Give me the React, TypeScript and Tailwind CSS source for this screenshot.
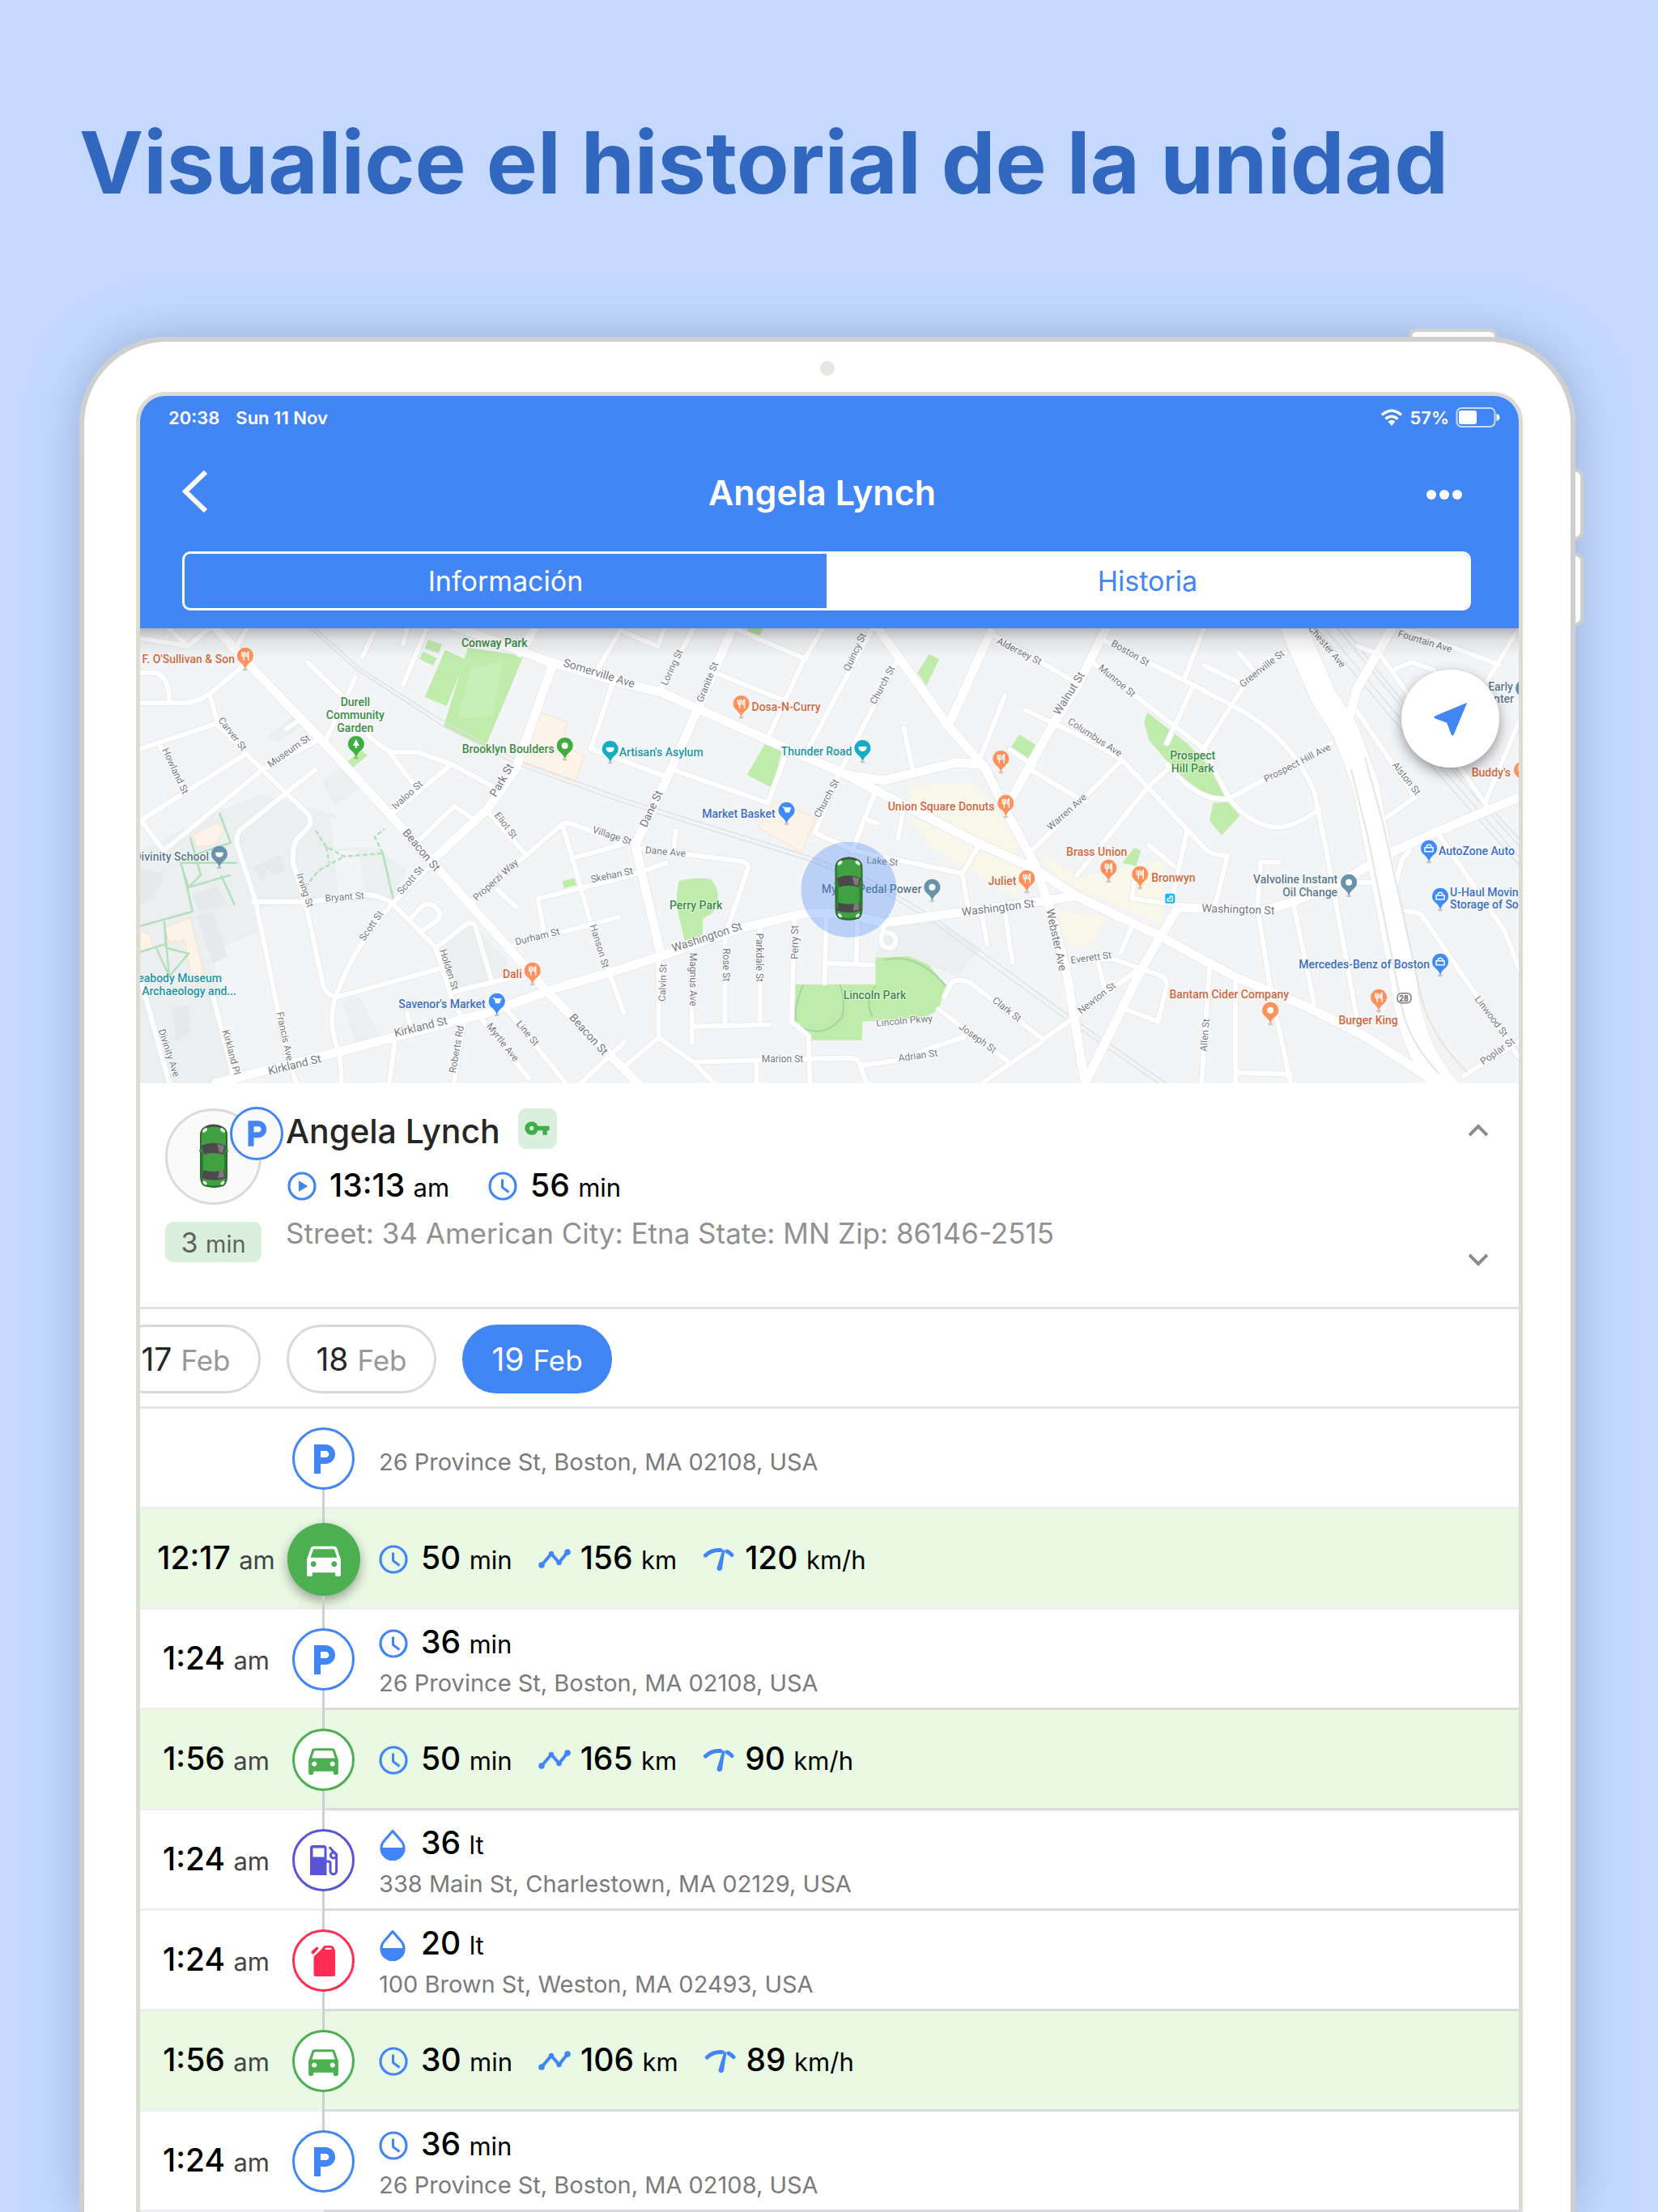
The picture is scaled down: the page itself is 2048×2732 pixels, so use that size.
import type { ReactNode } from "react";
import { MdDirectionsCar, MdLocalParking, MdNearMe, MdVpnKey } from "react-icons/md";
import clsx from "clsx";

type StopKind = "parking" | "drive" | "fuel" | "drain";

interface Stat {
  icon: "clock" | "distance" | "speed" | "drop";
  value: string;
  unit: string;
}

interface Stop {
  time?: string;
  kind: StopKind;
  active?: boolean;
  stats: Stat[];
  address?: string;
}

const stops: Stop[] = [
  { kind: "parking", stats: [], address: "26 Province St, Boston, MA 02108, USA" },
  {
    time: "12:17",
    kind: "drive",
    active: true,
    stats: [
      { icon: "clock", value: "50", unit: "min" },
      { icon: "distance", value: "156", unit: "km" },
      { icon: "speed", value: "120", unit: "km/h" },
    ],
  },
  {
    time: "1:24",
    kind: "parking",
    stats: [{ icon: "clock", value: "36", unit: "min" }],
    address: "26 Province St, Boston, MA 02108, USA",
  },
  {
    time: "1:56",
    kind: "drive",
    stats: [
      { icon: "clock", value: "50", unit: "min" },
      { icon: "distance", value: "165", unit: "km" },
      { icon: "speed", value: "90", unit: "km/h" },
    ],
  },
  {
    time: "1:24",
    kind: "fuel",
    stats: [{ icon: "drop", value: "36", unit: "lt" }],
    address: "338 Main St, Charlestown, MA 02129, USA",
  },
  {
    time: "1:24",
    kind: "drain",
    stats: [{ icon: "drop", value: "20", unit: "lt" }],
    address: "100 Brown St, Weston, MA 02493, USA",
  },
  {
    time: "1:56",
    kind: "drive",
    stats: [
      { icon: "clock", value: "30", unit: "min" },
      { icon: "distance", value: "106", unit: "km" },
      { icon: "speed", value: "89", unit: "km/h" },
    ],
  },
  {
    time: "1:24",
    kind: "parking",
    stats: [{ icon: "clock", value: "36", unit: "min" }],
    address: "26 Province St, Boston, MA 02108, USA",
  },
];

const days = [
  { day: "17", month: "Feb" },
  { day: "18", month: "Feb" },
  { day: "19", month: "Feb", selected: true },
];

/* ---------- icons ---------- */

function ClockIcon() {
  return (
    <svg className="w-9 h-9 text-[#4285f5]" viewBox="0 0 36 36" fill="none" stroke="currentColor" aria-hidden="true">
      <circle cx="18" cy="18" r="16" strokeWidth="3.200" />
      <path d="M17.500 9.500v10l8 6" strokeWidth="3" strokeLinejoin="round" />
    </svg>
  );
}

function PlayIcon() {
  return (
    <svg className="w-9 h-9 text-[#4285f5]" viewBox="0 0 36 36" fill="none" stroke="currentColor" aria-hidden="true">
      <circle cx="18" cy="18" r="16" strokeWidth="3.200" />
      <path d="M14.5 12v12l10-6z" fill="currentColor" strokeWidth="1" strokeLinejoin="round" />
    </svg>
  );
}

function DistanceIcon() {
  return (
    <svg className="w-10 h-7 text-[#4285f5]" viewBox="0 0 40 28" fill="none" stroke="currentColor" aria-hidden="true">
      <path d="M4 21 16 7l9.500 11L36 5" strokeWidth="4" strokeLinejoin="round" />
      <g fill="currentColor" stroke="none">
        <circle cx="4" cy="21" r="3.800" />
        <circle cx="16" cy="7" r="3.200" />
        <circle cx="25.500" cy="18" r="3.200" />
        <circle cx="36" cy="5" r="3.800" />
      </g>
    </svg>
  );
}

function SpeedIcon() {
  return (
    <svg className="w-10 h-8 text-[#4285f5]" viewBox="0 0 40 32" fill="none" stroke="currentColor" aria-hidden="true">
      <path d="M3.500 11C9 5.500 15 4 22 4.500" strokeWidth="5" strokeLinecap="round" />
      <path d="M30 6q4 2 6 4.500" strokeWidth="5" strokeLinecap="round" />
      <path d="m24.500 4 3 .6-3.500 23a3.200 3.200 0 0 1-6.300-1.600z" fill="currentColor" stroke="none" />
    </svg>
  );
}

function DropIcon() {
  return (
    <svg className="w-9 h-10 text-[#4285f5]" viewBox="0 0 36 40" aria-hidden="true">
      <path
        d="M17 3.500 7 15A14 14 0 1 0 27 15z"
        fill="none"
        stroke="currentColor"
        strokeWidth="3.200"
        strokeLinejoin="round"
      />
      <path d="M2 24h30a15 15 0 0 1-30 0z" fill="currentColor" />
    </svg>
  );
}

function PumpIcon() {
  return (
    <svg className="w-9 h-10" viewBox="0 0 36 40" fill="none" stroke="currentColor" aria-hidden="true">
      <path
        d="M4 1h14a3.500 3.500 0 0 1 3.500 3.500V38H1V4.500A3.500 3.500 0 0 1 4 1zm.5 3.500V15.500H18.500V4.500z"
        fill="currentColor"
        stroke="none"
        fillRule="evenodd"
      />
      <path
        d="M21 21h3a2 2 0 0 1 2 2v10a3.800 3.800 0 0 0 7.600 0V13l-8-9"
        strokeWidth="3"
        strokeLinecap="round"
        strokeLinejoin="round"
      />
      <circle cx="30" cy="13.500" r="3.600" strokeWidth="3" />
    </svg>
  );
}

function CanIcon() {
  return (
    <svg className="w-8 h-10" viewBox="0 0 32 40" fill="currentColor" aria-hidden="true">
      <path
        fillRule="evenodd"
        d="M18 1h7a4 4 0 0 1 3.500 2.500L30 7V36.500A2.500 2.500 0 0 1 27.500 39H6a2.500 2.500 0 0 1-2.500-2.500V16q0-1.500 1-2.500L13.500 5l1.500-2.500Q16 1 18 1zm.5 2.800L17.200 5.800h8.600L25 3.800z"
      />
      <path d="M1.300 7.500 6.500 3a1.500 1.500 0 0 1 2.200 2.500L4 10.800a1.800 1.800 0 0 1-2.700-3.300z" />
    </svg>
  );
}

const statIcons: Record<Stat["icon"], ReactNode> = {
  clock: <ClockIcon />,
  distance: <DistanceIcon />,
  speed: <SpeedIcon />,
  drop: <DropIcon />,
};

// Top view of the vehicle, 36 x 80 units
function CarShape() {
  return (
    <g>
      <path d="M6 4q12-7 24 0 5 3 5 10v50q0 10-5 13-12 4-24 0-5-3-5-13V14Q1 7 6 4z" fill="#2b6b2d" />
      <path d="M7 5q11-5 22 0 4 3 4 10v48q0 9-4 12-11 3-22 0-4-3-4-12V15q0-7 4-10z" fill="#3fa142" />
      <path d="M8 3q10-4 20 0l-1 2q-9-3-18 0z" fill="#4a4a4a" />
      <path d="M1 31l2 1v3l-3-1zm34 0-2 1v3l3-1z" fill="#2f8a32" />
      <path d="M3 27q15-7 30 0l-3 11q-12-4-24 0z" fill="#4b494b" />
      <path d="m22 25 9 2-2 9-4-1z" fill="#7d7a7e" />
      <path d="M5 57q13 4 26 0l2 10q-15 5-30 0z" fill="#4b494b" />
      <path d="m30 57-5 1-2 9 8-1z" fill="#7d7a7e" />
      <path d="M3 28l2 8v20l-2 8zm30 0-2 8v20l2 8z" fill="#2d7d30" />
      <g fill="#e4f3e4">
        <ellipse cx="7" cy="8" rx="3.500" ry="2" transform="rotate(-40 7 8)" />
        <ellipse cx="29" cy="8" rx="3.500" ry="2" transform="rotate(40 29 8)" />
        <ellipse cx="7" cy="73" rx="3" ry="1.800" transform="rotate(40 7 73)" />
        <ellipse cx="29" cy="73" rx="3" ry="1.800" transform="rotate(-40 29 73)" />
      </g>
    </g>
  );
}

/* ---------- map ---------- */

const minorRoads = [
  "M224 136 151 175 29 275 2 238",
  "M86 83 97 120 151 175 208 230Q214 240 206 248L193 262Q188 270 189 290L205 342 226 440Q230 456 246 455L369 421",
  "M128 46 86 81Q70 92 55 92H0",
  "M0 55H18Q36 58 36 90",
  "M0 12 59 22 86 0M35 0 59 22M132 0 117 27",
  "M0 149 94 118M25 146 55 201M0 238 128 157",
  "M216 175 124 249Q118 256 120 268L143 338 182 530 193 562",
  "M140 338H212L272 330Q290 326 312 340L365 394 385 456 400 486 388 562",
  "M362 290 312 340Q262 396 243 453 230 486 247 527L249 562",
  "M312 229 385 168M281 131Q300 150 312 153L342 153 385 168 446 201M308 153 342 198",
  "M207 42 251 85M266 61 228 142M289 5 275 35M354 0 325 70M330 0 325 20",
  "M339 268 388 220 411 235M430 227 476 279M411 338 522 242Q526 238 540 244L598 266",
  "M522 242 557 364 598 475M499 375 492 334 598 308 650 290M453 394 591 357M538 283 616 262",
  "M367 394 404 365Q412 362 415 370L434 434M388 449 457 432",
  "M335 358 350 342Q360 338 368 348 374 354 366 362L346 376",
  "M453 471 526 562M419 479 480 556M545 562 598 512M442 323 465 345M181 124 193 116",
  "M0 431 36 562M90 453 117 562M316 503 308 562M330 475 335 495",
  "M595 0 566 50M584 68 557 149 598 164 648 183",
  "M684 0 644 75M734 0 687 105M844 0 819 42 776 135M905 0 826 149M937 38 862 183 834 253",
  "M716 57 798 90M734 0 823 38M598 5 640 22 648 0",
  "M659 175 776 216 798 157M834 253 884 275 1016 303 1023 342M1037 268 1016 303",
  "M616 272 744 288Q754 292 751 298L727 368M662 250 660 270",
  "M909 201 880 275M895 235 911 241M944 123 955 175M944 220 937 260M1069 83 1037 164",
  "M641 506 598 542M641 405V506L684 536 709 562M684 536 826 532 880 531Q888 532 890 540L898 562",
  "M891 540 937 534 976 519 1019 505M809 357 805 486 826 504 828 562M762 536V562",
  "M682 400V512M723 376V490M766 366V490M682 492 777 490",
  "M848 357 846 438M887 357 885 414M848 414 905 416",
  "M994 456 1003 438Q1010 432 1026 438L1116 508 1158 479M987 471 1076 538M1041 562 1116 510",
  "M919 364 918 376Q936 376 934 388 930 400 918 392 914 384 918 376M1040 350 1047 390M1068 345 1078 412",
  "M1098 279 1212 164M1094 101 1158 131 1212 161 1247 198 1318 274Q1326 281 1344 281L1329 342",
  "M1101 175 1158 209 1170 215M1272 172 1244 198 1158 305M1055 8 1158 68M1075 150 1105 170",
  "M1176 42 1315 149 1347 212Q1376 246 1408 246 1430 244 1458 223",
  "M1347 210 1472 142M1269 168Q1310 218 1347 210",
  "M1194 16 1290 64 1347 94Q1420 130 1451 201L1465 268 1504 482",
  "M1315 0 1290 64M1301 72 1269 142M1415 31 1369 64 1312 153M1358 30 1376 52M1315 46 1360 68",
  "M1501 98 1576 209 1540 234M1529 27 1665 220M1704 116 1662 216M1552 50 1572 42 1600 52",
  "M1551 320 1560 285 1569 275M1565 349 1583 353 1704 530M1604 253 1687 375 1708 430",
  "M1636 553 1708 508M1426 342 1451 464M1408 289H1385L1381 345 1397 445 1422 562",
  "M1322 416 1312 562M1354 431V562M1354 549 1422 551M1560 0 1680 45M1704 0 1665 65M1505 22 1524 30",
  "M1158 412 1201 408 1264 430Q1271 436 1268 446L1258 486 1219 471M1158 479 1237 419M1184 412 1192 445",
  "M1226 368 1212 401M1294 249 1276 334M1247 268 1278 294M1230 306 1226 334 1283 342M1440 316 1520 314",
];

const majorRoads = [
  "M94 0 130 40 224 138 308 229 362 290 507 453 615 562",
  "M94 562 247 523 430 475 507 447 598 420 644 405 741 371 809 355Q848 346 919 364L1016 351 1158 331",
  "M380 -6 507 42 598 68 644 79 776 138 873 181 926 209 1037 266 1105 297 1158 331 1261 381 1354 431 1443 468 1515 505 1604 562",
  "M912 0 937 35 1001 123 1044 172 1073 231 1105 290 1123 342 1144 419 1168 562",
  "M1051 5 1001 116M873 181 919 188 1009 166 1041 168M1194 0 1158 72 1130 116 1076 212",
  "M730 5 687 105 651 186 612 268 644 405M511 42 465 172 430 223 362 286M488 0 470 30",
  "M1168 562 1237 423 1261 381 1283 345 1386 349 1426 338 1479 316 1551 275 1604 251 1704 209",
  "M1547 0 1504 75 1494 112",
];

const parks = [
  "M405 24 474 34 427 146 375 122z",
  "M377 27 402 38 379 96 352 85z",
  "M356 14 373 20 369 31 352 25z",
  "M350 29 367 37 362 46 345 38z",
  "M254 166 274 151 281 157 262 173z",
  "M522 312 538 309 541 317 524 321z",
  "M666 312Q690 307 705 310 716 320 714 335 714 352 696 358L695 379 673 386 668 364Q660 340 666 312z",
  "M809 440H909V407L950 405 975 416 996 442 987 471Q975 480 962 482L893 486 892 509H830L807 490z",
  "M773 142 794 149 781 197 750 181z",
  "M975 32 988 38 972 71 961 55z",
  "M1087 131 1110 146 1101 163 1075 149z",
  "M752 0H770L764 14 746 7z",
  "M1245 104 1294 142 1319 168 1342 209H1322L1301 197 1269 164 1247 138 1241 116z",
  "M1326 216 1347 215 1359 232 1337 256 1322 238z",
  "M1229 271 1237 275 1231 294 1214 290z",
];

const streets: [string, number, number, number, number?][] = [
  ["Carver St", 111, 133, 52],
  ["Museum St", 186, 155, -35],
  ["Howland St", 40, 178, 65],
  ["Ivaloo St", 333, 209, -42],
  ["Park St", 451, 190, -60, 14],
  ["Eliot St", 449, 246, 52],
  ["Beacon St", 344, 277, 50, 14],
  ["Scott St", 337, 314, -48],
  ["Scott St", 289, 370, -55],
  ["Bryant St", 253, 336, -4],
  ["Irving St", 200, 325, 72],
  ["Properzi Way", 442, 314, -42],
  ["Village St", 582, 260, 18],
  ["Skehan St", 584, 309, -12],
  ["Durham St", 492, 385, -14],
  ["Hanson St", 564, 394, 73],
  ["Holden St", 378, 423, 72],
  ["Francis Ave", 175, 505, 78],
  ["Kirkland Pl", 109, 525, 75],
  ["Divinity Ave", 32, 526, 72],
  ["Kirkland St", 192, 544, -14, 14],
  ["Kirkland St", 348, 497, -14, 14],
  ["Roberts Rd", 395, 521, -80],
  ["Myrtle Ave", 445, 514, 52],
  ["Line St", 476, 503, 50],
  ["Beacon St", 551, 505, 48, 14],
  ["Somerville Ave", 566, 60, 17, 14],
  ["Loring St", 661, 50, -65],
  ["Granite St", 705, 68, -68],
  ["Quincy St", 887, 31, -65],
  ["Church St", 921, 72, -62],
  ["Church St", 852, 212, -62],
  ["Dane St", 636, 225, -65, 14],
  ["Dane Ave", 649, 280, 5],
  ["Lake St", 917, 292, 5],
  ["Washington St", 702, 386, -18, 14],
  ["Calvin St", 650, 438, -88],
  ["Magnus Ave", 679, 434, 90],
  ["Rose St", 720, 416, 90],
  ["Parkdale St", 761, 407, 90],
  ["Perry St", 813, 388, -90],
  ["Washington St", 1061, 350, -7, 14],
  ["Webster Ave", 1128, 386, 78, 14],
  ["Clark St", 1069, 474, 38],
  ["Joseph St", 1033, 510, 36],
  ["Adrian St", 962, 532, -8],
  ["Marion St", 794, 536, 0],
  ["Lincoln Pkwy", 945, 489, -5],
  ["Aldersey St", 1085, 32, 27],
  ["Walnut St", 1152, 83, -58, 14],
  ["Warren Ave", 1148, 230, -42],
  ["Columbus Ave", 1178, 138, 33],
  ["Boston St", 1222, 34, 30],
  ["Munroe St", 1205, 68, 40],
  ["Greenville St", 1389, 53, -38],
  ["Chester Ave", 1464, 25, 50],
  ["Fountain Ave", 1587, 20, 17],
  ["Prospect Hill Ave", 1432, 170, -27],
  ["Alston St", 1562, 188, 52],
  ["Washington St", 1357, 352, 2, 14],
  ["Everett St", 1176, 411, -8],
  ["Newton St", 1185, 460, -38],
  ["Allen St", 1320, 503, -85],
  ["Linwood St", 1667, 482, 53],
  ["Poplar St", 1680, 526, -35],
];

type Anchor = "start" | "middle" | "end";

const places: [string, number, number, Anchor, string][] = [
  ["F. O'Sullivan & Son", 117, 43, "end", "#d0683f"],
  ["Durell", 266, 96, "middle", "#3a8d45"],
  ["Community", 266, 112, "middle", "#3a8d45"],
  ["Garden", 266, 128, "middle", "#3a8d45"],
  ["Conway Park", 438, 23, "middle", "#3a8d45"],
  ["Brooklyn Boulders", 512, 154, "end", "#3a8d45"],
  ["Artisan's Asylum", 592, 158, "start", "#1f96a3"],
  ["Dosa-N-Curry", 756, 102, "start", "#d0683f"],
  ["Thunder Road", 880, 157, "end", "#1f96a3"],
  ["Union Square Donuts", 1056, 225, "end", "#d0683f"],
  ["Market Basket", 785, 234, "end", "#3c6fc4"],
  ["Juliet", 1083, 317, "end", "#d0683f"],
  ["Mystic Pedal Power", 966, 327, "end", "#5c7a8c"],
  ["Perry Park", 687, 347, "middle", "#3a8d45"],
  ["Lincoln Park", 908, 458, "middle", "#3a8d45"],
  ["Brass Union", 1220, 281, "end", "#d0683f"],
  ["Bronwyn", 1250, 313, "start", "#d0683f"],
  ["Prospect", 1301, 162, "middle", "#3a8d45"],
  ["Hill Park", 1301, 178, "middle", "#3a8d45"],
  ["Valvoline Instant", 1480, 315, "end", "#5c7a8c"],
  ["Oil Change", 1480, 331, "end", "#5c7a8c"],
  ["AutoZone Auto", 1605, 280, "start", "#3c6fc4"],
  ["U-Haul Moving &", 1619, 331, "start", "#3c6fc4"],
  ["Storage of Somerville", 1619, 346, "start", "#3c6fc4"],
  ["Mercedes-Benz of Boston", 1594, 420, "end", "#3c6fc4"],
  ["Bantam Cider Company", 1420, 457, "end", "#d0683f"],
  ["Burger King", 1518, 489, "middle", "#d0683f"],
  ["Early", 1697, 77, "end", "#5c7a8c"],
  ["Center", 1698, 92, "end", "#5c7a8c"],
  ["Buddy's", 1694, 183, "end", "#d0683f"],
  ["Divinity School", 85, 287, "end", "#5c7a8c"],
  ["Peabody Museum", 101, 437, "end", "#1f96a3"],
  ["of Archaeology and...", 119, 453, "end", "#1f96a3"],
  ["Savenor's Market", 427, 469, "end", "#3c6fc4"],
  ["Dali", 472, 432, "end", "#d0683f"],
];

type PinGlyph = "food" | "dot" | "tree" | "cart" | "bag" | "mask";

const pins: [number, number, string, PinGlyph][] = [
  [130, 34, "#ff915c", "food"],
  [267, 143, "#3fae3f", "tree"],
  [525, 145, "#3fae3f", "dot"],
  [581, 149, "#12afc4", "mask"],
  [743, 93, "#ff915c", "food"],
  [893, 148, "#12afc4", "mask"],
  [1064, 161, "#ff915c", "food"],
  [1070, 216, "#ff915c", "food"],
  [799, 225, "#3d8bfd", "cart"],
  [1096, 309, "#ff915c", "food"],
  [979, 320, "#6894ab", "dot"],
  [1197, 296, "#ff915c", "food"],
  [1236, 304, "#ff915c", "food"],
  [1494, 314, "#6894ab", "dot"],
  [1593, 272, "#3d8bfd", "bag"],
  [1607, 331, "#3d8bfd", "bag"],
  [1607, 412, "#3d8bfd", "bag"],
  [1397, 472, "#ff915c", "dot"],
  [1531, 456, "#ff915c", "food"],
  [1710, 74, "#6894ab", "dot"],
  [1708, 175, "#ff915c", "food"],
  [98, 279, "#6894ab", "mask"],
  [441, 461, "#3d8bfd", "cart"],
  [485, 423, "#ff915c", "food"],
];

const pinGlyphs: Record<PinGlyph, ReactNode> = {
  food: <path d="M-4-5v4q0 2 2 2v5M0-5v4q0 2-2 2M-2-5v5M4 6V-5Q1.500-3 2 1h2" fill="none" stroke="#fff" strokeWidth="1.400" />,
  dot: <circle r="4" fill="#fff" />,
  tree: <path d="M0-6 4 2H1v3h-2V2h-3z" fill="#fff" />,
  cart: <path d="M-5-4h2l2 6h4l2-5h-7" fill="#fff" stroke="#fff" strokeWidth="1.300" />,
  bag: <path d="M-5-1h10v5H-5zm2 0a3 3.500 0 0 1 6 0" fill="none" stroke="#fff" strokeWidth="1.500" />,
  mask: <path d="M-5-2h10q0 6-5 6t-5-6z" fill="#fff" />,
};

function StreetMap() {
  return (
    <svg className="block w-full" viewBox="0 0 1704 562" role="img" aria-label="Mapa">
      <defs>
        <linearGradient id="map-shade" x1="0" y1="0" x2="0" y2="1">
          <stop offset="0" stopColor="#000" stopOpacity="0.260" />
          <stop offset="0.400" stopColor="#000" stopOpacity="0.080" />
          <stop offset="1" stopColor="#000" stopOpacity="0" />
        </linearGradient>
      </defs>
      <rect width="1704" height="562" fill="#f3f4f6" />

      {/* campus and institutional land */}
      <g fill="#ebeff0">
        <path d="M0 275 100 225 150 205 240 230 330 300 310 335 140 345 145 375 90 400 100 480 120 562H0z" />
        <path d="M225 190 250 170 270 200 240 220z M157 133 190 108 200 120 170 142z" />
        <path d="M375 385 410 368 455 410 450 430 390 445z M250 460 272 455 300 510 268 518z" />
        <path d="M919 364 980 360 1040 395 1010 430 975 416 950 405H909z" />
      </g>
      <g fill="#f3f4f6">
        <path d="M235 235 300 232 305 270 240 272zM240 275H270L280 335H245z" />
      </g>
      <g fill="#e6e9eb">
        <path d="M140 295 172 280 180 300 165 305 158 298 150 310z" />
        <path d="M64 330 95 318 108 342 75 350zM70 355 90 350 108 405 90 415z" />
        <path d="M0 298 30 303Q25 330 0 340zM40 470 60 465 62 500 45 510z" />
      </g>
      <g fill="#fdf3e9" stroke="#fae0c8">
        <path d="M492 103 528 116 522 145 549 157 538 190 470 166 482 138z" />
        <path d="M785 214 835 234 818 277 764 246z" />
        <path d="M66 255 95 240 104 248 92 268 70 270zM30 370 62 358 80 430 66 445 55 385 36 388zM0 375 12 378 16 395 0 400z" />
      </g>
      <g fill="#f9f6ea">
        <path d="M955 194 1030 190 1091 260 1080 283 950 212z" />
        <path d="M948 231 1034 268 1018 295 980 271z" />
        <path d="M1041 271 1109 305 1080 334 1026 297z" />
        <path d="M1110 275 1160 308 1265 286 1262 368 1190 335 1130 318z" />
        <path d="M1112 345 1194 357 1176 394H1150z" />
      </g>
      <g fill="#bfebab">
        {parks.map((d) => (
          <path key={d} d={d} />
        ))}
      </g>
      <path d="M409 50 448 40 436 108 392 112z" fill="#c9efb9" />
      <path
        d="M820 440Q806 470 812 490 845 510 868 480 872 460 865 440M909 442Q895 460 905 480M920 410Q960 400 996 442"
        fill="none"
        stroke="#a3d6a0"
        strokeWidth="2"
      />

      {/* railways */}
      <g fill="none" stroke="#dfe2e5" strokeWidth="1.500">
        <path d="M210 0 266 50 373 120 465 168 598 216 823 286 902 316 976 360 1148 486 1258 562" />
        <path d="M217 0 270 48 375 115 467 163 600 211 825 281 904 311 979 355 1150 480 1268 562" />
        <path d="M1454 0 1604 179 1718 308M1464 0 1614 179 1718 298M1480 0 1630 185 1718 285M1488 0 1640 190 1718 275" />
      </g>

      {/* campus footpaths */}
      <g fill="none" stroke="#b4dfbb" strokeWidth="2.500">
        <path d="M98 228 112 265 52 285M62 258 75 305 60 320 50 290 120 290M60 320 112 305M52 295 65 350M100 305 117 342M0 368 65 350M30 362 32 395 60 402 36 430zM0 400 32 390M20 395 36 430M300 278 313 335" />
        <path d="M217 250 230 270 252 282 300 278M230 270 234 290M204 320 220 300 252 282M300 278 290 258 302 248" strokeDasharray="6 3" />
      </g>

      {/* casings first so that crossings stay open */}
      <g fill="none" strokeLinecap="round" strokeLinejoin="round">
        <g stroke="#e7e9ec">
          {minorRoads.map((d) => (
            <path key={d} d={d} strokeWidth="8" />
          ))}
          {majorRoads.map((d) => (
            <path key={d} d={d} strokeWidth="13" />
          ))}
          <path d="M1426 0 1462 83 1490 127 1515 194 1537 308 1562 438Q1570 520 1620 575" strokeWidth="34" />
        </g>
        <g stroke="#fff">
          {minorRoads.map((d) => (
            <path key={d} d={d} strokeWidth="6" />
          ))}
          {majorRoads.map((d) => (
            <path key={d} d={d} strokeWidth="11" />
          ))}
          <path d="M1426 0 1462 83 1490 127 1515 194 1537 308 1562 438Q1570 520 1620 575" strokeWidth="32" />
        </g>
        <path
          d="M1497 175 1518 260 1560 470Q1568 510 1605 550M1514 160 1536 240 1580 440Q1590 500 1640 548"
          stroke="#e8e4dc"
          strokeWidth="2"
        />
      </g>

      <g fontFamily="Roboto, sans-serif" stroke="#fff" strokeWidth="2" paintOrder="stroke" strokeLinejoin="round">
        {streets.map(([name, x, y, angle, size]) => (
          <text
            key={`${name}-${x}`}
            x={x}
            y={y}
            transform={`rotate(${angle} ${x} ${y})`}
            textAnchor="middle"
            fontSize={size ?? 12}
            fill="#75797e"
          >
            {name}
          </text>
        ))}
        <g fontSize="14" fontWeight="500" strokeOpacity="0.700">
          {places.map(([name, x, y, anchor, color]) => (
            <text key={`${name}-${x}`} x={x} y={y} textAnchor={anchor} fill={color}>
              {name}
            </text>
          ))}
        </g>
      </g>

      {pins.map(([x, y, color, glyph]) => (
        <g key={`${x}-${y}`} transform={`translate(${x} ${y})`}>
          <ellipse cy="17" rx="3" ry="1.500" fill="#000" opacity="0.180" />
          <path d="M0 17Q-1 12-6 8A10 10 0 1 1 6 8Q1 12 0 17z" fill={color} />
          {pinGlyphs[glyph]}
        </g>
      ))}

      <rect x="1267" y="328" width="12" height="12" rx="2" fill="#1cb5f5" />
      <path d="M1270 337v-3h3v-3h3v6z" fill="none" stroke="#fff" strokeWidth="1.300" />
      <rect x="1554" y="451" width="17" height="12" rx="5" fill="#fff" stroke="#777b80" strokeWidth="1.500" />
      <text x="1562" y="461" textAnchor="middle" fontFamily="Roboto, sans-serif" fontSize="10" fontWeight="700" fill="#666">
        28
      </text>

      <rect width="1704" height="36" fill="url(#map-shade)" />

      {/* current unit */}
      <circle cx="876" cy="323" r="59" fill="#4285f5" fillOpacity="0.320" />
      <g transform="translate(858 282)">
        <CarShape />
      </g>
    </svg>
  );
}

/* ---------- screen parts ---------- */

function StatusBar() {
  return (
    <div className="flex items-center justify-between h-14 pl-[35px] pr-9 pb-0.5 text-[22px] leading-7 font-semibold">
      <div className="flex gap-5">
        <span>20:38</span>
        <span>Sun 11 Nov</span>
      </div>
      <div className="flex items-center gap-2 -mr-[14px]">
        <svg className="w-7 h-6" viewBox="0 0 28 24" fill="none" stroke="currentColor" strokeWidth="3.500" aria-hidden="true">
          <path d="M2 8.500Q14-2 26 8.500M6.500 13.500Q14 7 21.500 13.500" />
          <path d="M9.500 16.500Q14 13 18.500 16.500L14 22z" fill="currentColor" stroke="none" />
        </svg>
        <span>57%</span>
        <svg className="w-14 h-7" viewBox="0 0 56 28" aria-hidden="true">
          <rect x="1.500" y="2" width="47" height="23" rx="6" fill="none" stroke="#fff" strokeOpacity="0.700" strokeWidth="2" />
          <rect x="4" y="5" width="22" height="17" rx="3" fill="#fff" />
          <path d="M50.500 9v9q4-1 4-4.500t-4-4.500z" fill="#fff" />
        </svg>
      </div>
    </div>
  );
}

function Header() {
  return (
    <header className="bg-[#4285f5] text-white">
      <StatusBar />
      <div className="flex items-center justify-between h-32 pl-[52px] pr-[70px]">
        <button type="button" aria-label="Volver" className="w-14 h-14">
          <svg className="w-8 h-14" viewBox="0 0 32 56" fill="none" stroke="currentColor" strokeWidth="6" aria-hidden="true">
            <path d="M29 2 4 26l25 24" />
          </svg>
        </button>
        <h2 className="pb-0.5 text-[43px] leading-14 font-semibold">Angela Lynch</h2>
        <button type="button" aria-label="Más opciones" className="flex items-center justify-end gap-1 w-14 h-14 pt-1">
          <span className="w-3 h-3 shrink-0 rounded-full bg-white" />
          <span className="w-3 h-3 shrink-0 rounded-full bg-white" />
          <span className="w-3 h-3 shrink-0 rounded-full bg-white" />
        </button>
      </div>
      <div className="pl-[52px] pt-2 pb-[22px] pr-[59px]">
        <div className="grid grid-cols-2 h-[73px] border-3 border-white rounded-[10px] text-[34px] leading-10 overflow-hidden">
          <button type="button">Información</button>
          <button type="button" className="bg-white text-[#4285f5]" aria-current="page">
            Historia
          </button>
        </div>
      </div>
    </header>
  );
}

function UnitSummary() {
  return (
    <section className="flex gap-[30px] h-[279px] pt-[31px] pl-[31px] pr-[30px] border-b-3 border-[#dfdfe5]">
      <div className="relative w-[119px] shrink-0">
        <div className="flex items-center justify-center w-[119px] h-[119px] rounded-full border-3 border-[#dadada] bg-[#fafafa]">
          <svg className="w-9 h-20" viewBox="0 0 36 80" aria-hidden="true">
            <CarShape />
          </svg>
        </div>
        <div className="absolute -top-0.5 left-20 flex items-center justify-center w-[66px] h-[66px] rounded-full border-3 border-[#4285f5] bg-[#fafafa] text-[#4285f5]">
          <MdLocalParking size={42} aria-label="Estacionado" />
        </div>
        <div className="flex items-center justify-center h-[50px] mt-[21px] pt-1 rounded-[10px] bg-[#daf0dc] text-[#5d635d] text-[34px] leading-10">
          <p>
            3 <span className="text-[29px]">min</span>
          </p>
        </div>
      </div>

      <div className="grow">
        <div className="flex items-center gap-[22px] h-[50px]">
          <h3 className="pt-1.5 text-[41px] leading-12 font-medium text-[#262626]">Angela Lynch</h3>
          <span className="flex items-center justify-center w-12 h-[50px] rounded-[10px] bg-[#daf0dc] text-[#3fae49]">
            <MdVpnKey size={33} aria-label="Encendido" />
          </span>
        </div>
        <div className="flex items-center gap-12 h-9 mt-[28px] pl-0.5 text-[39px] font-medium text-black">
          <p className="flex items-center gap-4">
            <PlayIcon />
            <span>
              13:13 <span className="text-[31px] font-normal">am</span>
            </span>
          </p>
          <p className="flex items-center gap-4">
            <ClockIcon />
            <span>
              56 <span className="text-[31px] font-normal">min</span>
            </span>
          </p>
        </div>
        <p className="mt-5 text-[35px] leading-10 text-[#919191]">
          Street: 34 American City: Etna State: MN Zip: 86146-2515
        </p>
      </div>

      <div className="flex flex-col justify-between h-[214px] text-[#8a8a8f]">
        <button type="button" aria-label="Anterior" className="flex items-center justify-center w-10 h-[54px]">
          <svg className="w-6 h-4" viewBox="0 0 24 16" fill="none" stroke="currentColor" strokeWidth="4" aria-hidden="true">
            <path d="M1 14 12 3l11 11" />
          </svg>
        </button>
        <button type="button" aria-label="Siguiente" className="flex items-center justify-center w-10 h-[54px]">
          <svg className="w-6 h-4" viewBox="0 0 24 16" fill="none" stroke="currentColor" strokeWidth="4" aria-hidden="true">
            <path d="m1 2 11 11L23 2" />
          </svg>
        </button>
      </div>
    </section>
  );
}

function DayPicker() {
  return (
    <nav className="flex gap-8 h-[123px] pt-[19px] -ml-9 border-b-3 border-[#e6e6ea]" aria-label="Días">
      {days.map(({ day, month, selected }) => (
        <button
          key={day}
          type="button"
          aria-pressed={!!selected}
          className={clsx(
            "w-[185px] h-[85px] pt-0.5 rounded-full border-3 text-[39px] leading-12",
            selected ? "border-[#4285f5] bg-[#4285f5] text-white" : "border-[#d9d9d9] text-[#262626]"
          )}
        >
          {day} <span className={clsx("text-[35px]", !selected && "text-[#98989d]")}>{month}</span>
        </button>
      ))}
    </nav>
  );
}

const kindStyles: Record<StopKind, string> = {
  parking: "border-[#4285f5] text-[#4285f5]",
  drive: "border-[#4caf50] text-[#4caf50]",
  fuel: "border-[#5856d6] text-[#5856d6]",
  drain: "border-[#ff2d55] text-[#ff2d55]",
};

function StopIcon({ kind, active }: { kind: StopKind; active?: boolean }) {
  if (active) {
    return (
      <div className="flex items-center justify-center w-[90px] h-[90px] shrink-0 rounded-full bg-[#4caf50] text-white shadow-[0_6px_14px_rgba(0,0,0,0.35)]">
        <MdDirectionsCar size={56} />
      </div>
    );
  }
  return (
    <div
      className={clsx(
        "flex items-center justify-center w-[77px] h-[77px] shrink-0 rounded-full border-3 bg-white",
        kindStyles[kind]
      )}
    >
      {kind === "parking" && <MdLocalParking size={48} />}
      {kind === "drive" && <MdDirectionsCar size={49} />}
      {kind === "fuel" && <PumpIcon />}
      {kind === "drain" && <CanIcon />}
    </div>
  );
}

interface StopRowProps {
  stop: Stop;
  first: boolean;
  last: boolean;
  faint: boolean;
}

function StopRow({ stop, first, last, faint }: StopRowProps) {
  return (
    <li className={clsx("relative flex h-[124px]", stop.kind === "drive" && "bg-[#e9f9e3]")}>
      <div className="absolute inset-x-0 bottom-0 flex h-[3px]" aria-hidden="true">
        <span className="w-[227px] bg-[#efeff3]" />
        <span className={clsx("grow", faint ? "bg-[#efeff3]" : "bg-[#dadade]")} />
      </div>
      <div className="flex items-center justify-center w-[188px] shrink-0 text-[39px] leading-12 font-medium text-black">
        {stop.time && (
          <p>
            {stop.time} <span className="text-[31px] font-normal text-[#444]">am</span>
          </p>
        )}
      </div>
      <div className="relative flex flex-col items-center w-[77px] shrink-0">
        <span className={clsx("grow w-[3px]", !first && "bg-[#cdcfcf]")} />
        <StopIcon kind={stop.kind} active={stop.active} />
        <span className={clsx("grow w-[3px]", !last && "bg-[#cdcfcf]")} />
      </div>
      <div className={clsx("flex flex-col justify-center pl-[30px]", stop.address && "pt-2")}>
        {stop.stats.length > 0 && (
          <div className="flex items-center gap-8 text-[39px] leading-12 font-medium text-black">
            {stop.stats.map(({ icon, value, unit }) => (
              <p key={icon} className={clsx("flex items-center", icon === "clock" || icon === "drop" ? "gap-4" : "gap-3")}>
                {statIcons[icon]}
                <span>
                  {value} <span className="text-[31px] font-normal">{unit}</span>
                </span>
              </p>
            ))}
          </div>
        )}
        {stop.address && <p className="text-[29px] leading-12 text-[#7b7b7b]">{stop.address}</p>}
      </div>
    </li>
  );
}

export default function App() {
  return (
    <div className="min-h-screen overflow-hidden bg-[#c5d9ff] pl-[98px] pr-[102px] font-[Inter,sans-serif]">
      <h1 className="h-[416px] pt-[137px] text-[106px] leading-[128px] font-bold text-[#3267bf] whitespace-nowrap">
        Visualice el historial de la unidad
      </h1>

      <div className="relative rounded-t-[108px] shadow-[0_0_60px_rgba(110,140,170,0.55)]">
        {/* hardware buttons */}
        <span className="absolute -top-[10px] right-24 w-[110px] h-6 rounded-t-[10px] border-4 border-[#cfd0cd] bg-white" />
        <span className="absolute top-[163px] -right-[10px] w-5 h-[88px] rounded-r-[10px] border-4 border-[#cfd0cd] bg-white" />
        <span className="absolute top-[267px] -right-[10px] w-5 h-[90px] rounded-r-[10px] border-4 border-[#cfd0cd] bg-white" />

        <div className="relative pt-[62px] pl-16 pr-[59px] bg-white border-6 border-b-0 border-[#cfcfcf] rounded-t-[108px]">
          <span className="absolute top-[24px] left-1/2 w-[18px] h-[18px] -translate-x-1/2 rounded-full bg-[#e5e7e3]" />
          <main className="border-5 border-b-0 border-[#dcdcd4] rounded-t-[36px] bg-white overflow-hidden">
            <Header />
            <div className="relative">
              <StreetMap />
              <button
                type="button"
                aria-label="Centrar en la unidad"
                className="absolute top-[51px] right-6 flex items-center justify-center w-[121px] h-[121px] rounded-full bg-white text-[#4285f5] shadow-[0_6px_16px_rgba(0,0,0,0.4)]"
              >
                <MdNearMe size={54} />
              </button>
            </div>
            <UnitSummary />
            <DayPicker />
            <ul>
              {stops.map((stop, i) => (
                <StopRow key={i} stop={stop} first={i === 0} last={i === stops.length - 1} faint={i < 2} />
              ))}
            </ul>
          </main>
        </div>
      </div>
    </div>
  );
}
